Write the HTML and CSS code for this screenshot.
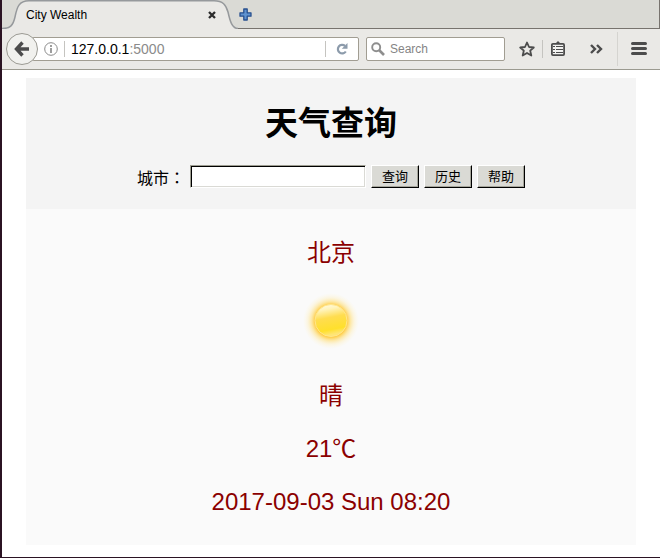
FILE: index.html
```html
<!DOCTYPE html>
<html lang="zh-CN">
<head>
<meta charset="utf-8">
<title>City Wealth</title>
<link rel="stylesheet" href="styles.css">
</head>
<body>
<div class="window">
  <header class="chrome">
    <div class="tabs">
      <div class="tab">
        <svg class="tab-shape" viewBox="0 0 236 29" preserveAspectRatio="none" aria-hidden="true">
          <path d="M0 29 V28.5 C8 28.5 11 26 13 17 C15 7 17 .8 27 .8 H212 C221 .8 224 5 226 12 C228 21 230 28.5 236 28.5 V29 Z" fill="#eae9e6"/>
          <path d="M0 28.5 C8 28.5 11 26 13 17 C15 7 17 .8 27 .8 H212 C221 .8 224 5 226 12 C228 21 230 28.5 236 28.5" fill="none" stroke="#96999c" stroke-width="1.5"/>
        </svg>
        <span class="tab-title">City Wealth</span>
        <button class="icon tab-close" aria-label="Close tab"><svg width="8" height="8" viewBox="0 0 8 8"><path d="M1 1 7 7M7 1 1 7" stroke="#2b2b2b" stroke-width="2.3"/></svg></button>
      </div>
      <button class="icon new-tab" aria-label="New tab"><svg width="13" height="13" viewBox="0 0 13 13"><path d="M4.800 1H8.200V4.800H12V8.200H8.200V12H4.800V8.200H1V4.800H4.800Z" fill="#5f93d0" stroke="#28508f" stroke-width="1.300" stroke-linejoin="round"/></svg></button>
    </div>
    <div class="toolbar">
      <button class="back" aria-label="Back"><svg width="16" height="16" viewBox="0 0 16 16"><path d="M8.500 1.500 2.500 8 8.500 14.500M3 8H15" fill="none" stroke="#4c4c4c" stroke-width="3.400"/></svg></button>
      <div class="url">
        <svg width="14" height="14" viewBox="0 0 14 14" aria-hidden="true"><circle cx="7" cy="7" r="6.300" fill="none" stroke="#8b8b8b"/><path d="M7 3V5M7 6V11" stroke="#858585" stroke-width="1.600"/></svg>
        <i class="rule"></i>
        <span class="address">127.0.0.1<span class="port">:5000</span></span>
        <i class="rule"></i>
        <button class="icon reload" aria-label="Reload"><svg width="12" height="12" viewBox="0 0 12 12"><path d="M9 2.900A4.300 4.300 0 1 0 9.800 8.500" fill="none" stroke="#8c9bab" stroke-width="2.200"/><path d="M11.500 0V5.800H5.800Z" fill="#8c9bab"/></svg></button>
      </div>
      <label class="search">
        <svg width="14" height="14" viewBox="0 0 14 14" aria-hidden="true"><circle cx="5.200" cy="5.200" r="4" fill="none" stroke="#8e8e8e" stroke-width="1.900"/><path d="M8 8 13 13" stroke="#8e8e8e" stroke-width="2.600"/></svg>
        <input class="search-input" type="text" placeholder="Search" aria-label="Search">
      </label>
      <button class="icon star" aria-label="Bookmark"><svg width="16" height="16" viewBox="0 0 16 16"><path d="M8 1.500 10 6 14.800 6.500 11.200 9.700 12.300 14.500 8 12 3.700 14.500 4.800 9.700 1.200 6.500 6 6Z" fill="none" stroke="#4c4c4c" stroke-width="1.800" stroke-linejoin="round"/></svg></button>
      <i class="rule"></i>
      <button class="icon" aria-label="Bookmarks list"><svg width="16" height="16" viewBox="0 0 16 16"><path d="M5 3 8 0 11 3Z" fill="#4c4c4c"/><rect x="1.900" y="2.900" width="12.200" height="11.200" rx="1" fill="#f2f2f0" stroke="#4c4c4c" stroke-width="1.800"/><path d="M3 5.500H5M6 5.500H13M3 8.500H5M6 8.500H13M3 11.500H5M6 11.500H13" stroke="#4c4c4c" stroke-width="1.200"/></svg></button>
      <button class="icon more" aria-label="More tools"><svg width="16" height="16" viewBox="0 0 16 16"><path d="M3 4 7 8 3 12M9 4 13 8 9 12" fill="none" stroke="#4c4c4c" stroke-width="2.400"/></svg></button>
      <i class="rule tall"></i>
      <button class="icon" aria-label="Menu"><svg width="16" height="16" viewBox="0 0 16 16"><path d="M1.500 2.500H14.500M1.500 7.500H14.500M1.500 12.500H14.500" stroke="#4c4c4c" stroke-width="3" stroke-linecap="round"/></svg></button>
    </div>
  </header>
  <main class="page">
    <section class="query">
      <h1>天气查询</h1>
      <form class="form">
        <label class="city-label" for="city" lang="zh-TW">城市：</label>
        <input class="city" id="city" type="text">
        <button class="btn" type="button">查询</button>
        <button class="btn" type="button">历史</button>
        <button class="btn" type="button">帮助</button>
      </form>
    </section>
    <section class="result">
      <p>北京</p>
      <svg class="sun" viewBox="0 0 64 65" role="img" aria-label="晴">
        <defs>
          <radialGradient id="glow"><stop offset=".56" stop-color="#ffc93a"/><stop offset=".7" stop-color="#ffdc70" stop-opacity=".6"/><stop offset=".84" stop-color="#ffeaa6" stop-opacity=".3"/><stop offset="1" stop-color="#fff3c9" stop-opacity="0"/></radialGradient>
          <linearGradient id="disc" x2=".2" y2="1"><stop offset="0" stop-color="#fffdf2"/><stop offset=".22" stop-color="#fff3b8"/><stop offset=".48" stop-color="#ffdd50"/><stop offset=".85" stop-color="#ffe02c"/><stop offset="1" stop-color="#ffe574"/></linearGradient>
        </defs>
        <circle cx="32" cy="29" r="28" fill="url(#glow)"/>
        <circle cx="32" cy="28.500" r="16" fill="url(#disc)" stroke="#ffe68c"/>
      </svg>
      <p>晴</p>
      <p>21℃</p>
      <p>2017-09-03 Sun 08:20</p>
    </section>
  </main>
</div>
</body>
</html>
```
FILE: styles.css
```css
* { box-sizing: border-box; }

body {
  margin: 0;
  background: #fff;
  color: #000;
  font-family: "Liberation Sans", "Noto Sans CJK SC", sans-serif;
}

.window {
  min-height: 100vh;
  display: flex;
  flex-direction: column;
  border-left: 2px solid #2b1323;
  border-bottom: 1px solid #2b1323;
}

button, input { font-family: inherit; }

svg { display: block; flex: none; }

.chrome { font-family: "Liberation Sans", sans-serif; }

.icon {
  padding: 0;
  border: 0;
  background: none;
}

.tabs {
  display: flex;
  align-items: center;
  height: 29px;
  background: #dadad5;
  box-shadow: inset 0 -1px #77736e, inset -1px 0 #77736e;
}

.tab {
  position: relative;
  display: flex;
  align-items: center;
  justify-content: space-between;
  width: 236px;
  height: 29px;
  padding: 0 22px 0 24px;
  font-size: 12px;
}

.tab-shape {
  position: absolute;
  inset: 0;
  width: 100%;
  height: 100%;
}

.tab-title, .tab-close { position: relative; }

.new-tab { margin-left: 1px; }

.toolbar {
  display: flex;
  align-items: center;
  height: 41px;
  padding: 0 13px 0 4px;
  background: #eae9e6;
  border-bottom: 1px solid #9b9a90;
}

.back {
  position: relative;
  display: grid;
  place-items: center;
  flex: none;
  width: 32px;
  height: 32px;
  padding: 0;
  border: 1px solid #9b9a93;
  border-radius: 50%;
  background: #f1f1ee;
}

.url, .search {
  display: flex;
  align-items: center;
  height: 24px;
  border: 1px solid #a19d92;
  border-radius: 2px;
  background: #fff;
}

.url {
  flex: 1;
  min-width: 0;
  margin-left: -6px;
  padding: 0 10px 0 11px;
}

.rule {
  flex: none;
  width: 1px;
  height: 18px;
  background: #c5c4c0;
}

.rule.tall {
  height: 34px;
  margin: 0 13px;
  background: #d5d4d0;
}

.url .rule {
  height: 16px;
  margin: 0 6px;
}

.address {
  flex: 1;
  font-size: 14px;
  line-height: 20px;
}

.port { color: #8b8b8b; }

.reload { margin-left: 4px; }

.search {
  flex: 0 1 139px;
  gap: 5px;
  margin-left: 7px;
  padding: 0 4px;
}

.search-input {
  flex: 1;
  width: 0;
  padding: 0;
  border: 0;
  background: none;
  font-size: 12px;
}

.search-input::placeholder { color: #858585; }

.star { margin: 0 7px 0 14px; }

.star + .rule { margin-right: 7px; }

.more { margin-left: 22px; }

.page { padding: 8px 24px 12px; }

.query {
  padding: 22px 16px 21px;
  background: #f4f4f4;
}

h1 {
  margin: 0 0 17px;
  font-size: 33px;
  line-height: 48px;
  text-align: center;
}

.form {
  display: flex;
  justify-content: center;
  align-items: center;
  gap: 5px;
  font-size: 16px;
  line-height: 20px;
}

.city-label { font-family: "Noto Sans CJK TC", sans-serif; }

.city {
  width: 176px;
  height: 23px;
  padding: 1px 4px;
  border: 1px solid;
  border-color: #9d9d91 #fff #fff #9d9d91;
  box-shadow: inset 1px 1px #000, inset -1px -1px #dadad5;
  background: #fff;
}

.btn {
  width: 48px;
  height: 23px;
  padding: 0;
  border: 1px solid;
  border-color: #fff #000 #000 #fff;
  box-shadow: inset -1px -1px #a5a59b;
  background: #dadad5;
  color: #000;
  font-size: 13px;
  line-height: 20px;
}

.result {
  display: flex;
  flex-direction: column;
  align-items: center;
  gap: 25px;
  padding: 30px 16px 29px;
  background: #fafafa;
  color: #8b0000;
  font-size: 24px;
  line-height: 28px;
  text-align: center;
}

.result p { margin: 0; }

.sun {
  width: 64px;
  height: 65px;
}
```
